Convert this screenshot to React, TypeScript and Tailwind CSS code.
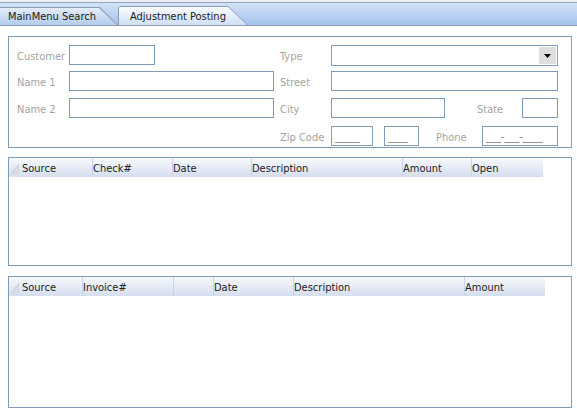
import React from 'react';

const font = { fontFamily: '"DejaVu Sans Condensed", "Liberation Sans", sans-serif' };

interface Col {
    label: string;
    width: number;
}

const checkCols: Col[] = [
    { label: 'Source', width: 72 },
    { label: 'Check#', width: 80 },
    { label: 'Date', width: 79 },
    { label: 'Description', width: 151 },
    { label: 'Amount', width: 69 },
    { label: 'Open', width: 72 },
];

const invoiceCols: Col[] = [
    { label: 'Source', width: 62 },
    { label: 'Invoice#', width: 91 },
    { label: '', width: 40 },
    { label: 'Date', width: 80 },
    { label: 'Description', width: 171 },
    { label: 'Amount', width: 81 },
];

const Label = ({ text, w, ml }: { text: string; w: string; ml?: string }) => (
    <div className={`${w} ${ml ?? ''} text-[11px] text-[#a3a3a3] leading-[23px] shrink-0`}>{text}</div>
);

const Box = ({ w, mask, ml }: { w: string; mask?: string; ml?: string }) => (
    <div className={`${w} ${ml ?? ''} h-[20px] border border-[#7f9db9] bg-white shrink-0 text-[11px] text-[#7a7a7a] leading-[19px] pl-[3px] overflow-hidden whitespace-pre`}>
        {mask}
    </div>
);

const Grid = ({ cols, height }: { cols: Col[]; height: string }) => (
    <div className={`ml-2 w-[564px] ${height} border border-[#7f9db9] bg-white`}>
        <div className="flex h-[19px] bg-gradient-to-b from-[#f7f9fc] to-[#d5deef] w-fit">
            <div className="w-[11px] h-full flex items-end justify-end pb-[3px] pr-[1px]">
                <svg width="8" height="10" viewBox="0 0 8 10">
                    <polygon points="8,0 8,10 0,10" fill="#d9dde4" stroke="#c4cbd6" strokeWidth="0.8" />
                </svg>
            </div>
            {cols.map((c, i) => (
                <div
                    key={i}
                    style={{ width: c.width }}
                    className={`h-full text-[11px] text-[#222] leading-[22px] ${i === 0 ? 'pl-[2px]' : 'pl-0 border-l border-[#c9d4e6]'}`}
                >
                    {c.label}
                </div>
            ))}
        </div>
    </div>
);

export default function App() {
    return (
        <div className="w-[577px] h-[412px] bg-white overflow-hidden" style={font}>
            {/* tab strip */}
            <div className="flex flex-col h-[26px]">
                <div className="h-[2px] bg-[#eceff5]" />
                <div className="h-px bg-[#97a2b5]" />
                <div className="h-[22px] flex items-end bg-gradient-to-b from-[#d3e3f7] via-[#bcd3f2] to-[#a3c1ea]">
                    <div className="w-[118px] h-[18px] bg-[#8c9db7] [clip-path:polygon(0_0,100px_0,118px_100%,0_100%)] pt-px">
                        <div className="h-full bg-gradient-to-b from-[#e4edf9] to-[#b2ccee] [clip-path:polygon(0_0,99px_0,117px_100%,0_100%)] text-[11px] text-[#1a1a1a] leading-[18px] pl-[8px]">
                            MainMenu Search
                        </div>
                    </div>
                    <div className="w-[130px] h-[19px] bg-[#8c9db7] [clip-path:polygon(0_2px,2px_0,110px_0,130px_100%,0_100%)] pt-px pl-px">
                        <div className="h-full bg-gradient-to-b from-[#fbfdff] to-[#cfdff5] [clip-path:polygon(0_1px,1px_0,109px_0,128px_100%,0_100%)] text-[11px] text-[#1a1a1a] leading-[19px] pl-[11px]">
                            Adjustment Posting
                        </div>
                    </div>
                </div>
                <div className="h-px bg-[#8d9db8]" />
            </div>

            {/* customer panel */}
            <div className="ml-2 mt-[10px] w-[564px] h-[112px] border border-[#7f9db9] pt-2 pl-2 flex flex-col">
                <div className="flex">
                    <Label text="Customer" w="w-[52px]" />
                    <Box w="w-[86px]" />
                    <Label text="Type" w="w-[51px]" ml="ml-[125px]" />
                    <div className="w-[227px] h-[21px] border border-[#7f9db9] bg-white flex justify-end items-center pr-px">
                        <div className="w-[17px] h-[17px] bg-[#dedede] flex items-center justify-center">
                            <svg width="7" height="4" viewBox="0 0 7 4">
                                <polygon points="0,0 7,0 3.5,4" fill="#000" />
                            </svg>
                        </div>
                    </div>
                </div>
                <div className="flex mt-[3px]">
                    <Label text="Name 1" w="w-[52px]" />
                    <Box w="w-[205px]" />
                    <Label text="Street" w="w-[51px]" ml="ml-[6px]" />
                    <Box w="w-[227px]" />
                </div>
                <div className="flex mt-[4px]">
                    <Label text="Name 2" w="w-[52px]" />
                    <Box w="w-[205px]" />
                    <Label text="City" w="w-[51px]" ml="ml-[6px]" />
                    <Box w="w-[114px]" />
                    <Label text="State" w="w-[45px]" ml="ml-[32px]" />
                    <Box w="w-[36px]" />
                </div>
                <div className="flex mt-[5px]">
                    <Label text="Zip Code" w="w-[51px]" ml="ml-[263px]" />
                    <Box w="w-[42px]" mask="_____" />
                    <Box w="w-[35px]" mask="____" ml="ml-[11px]" />
                    <Label text="Phone" w="w-[46px]" ml="ml-[17px]" />
                    <Box w="w-[76px]" mask="___-___-____" />
                </div>
            </div>

            {/* checks grid */}
            <div className="mt-[9px]">
                <Grid cols={checkCols} height="h-[109px]" />
            </div>

            {/* invoices grid */}
            <div className="mt-[10px]">
                <Grid cols={invoiceCols} height="h-[132px]" />
            </div>
        </div>
    );
}
